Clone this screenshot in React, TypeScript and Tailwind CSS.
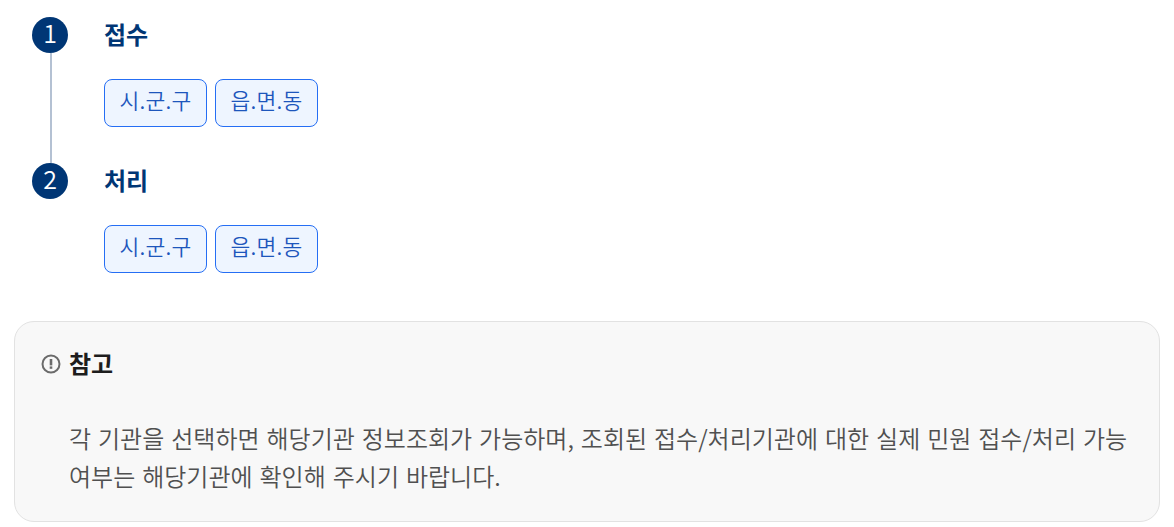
const AGENCIES = ["시.군.구", "읍.면.동"];

const STEPS = [
  { no: 1, title: "접수" },
  { no: 2, title: "처리" },
];

const NoticeIcon = () => (
  <svg width="20" height="20" viewBox="0 0 20 20" fill="none" className="shrink-0">
    <circle cx="10" cy="10" r="8.5" stroke="#6b6b6b" strokeWidth="2" />
    <path d="M10 5v6.4" stroke="#6b6b6b" strokeWidth="2.6" />
    <path d="M10 12.4v2.4" stroke="#6b6b6b" strokeWidth="2.6" />
  </svg>
);

const App = () => {
  return (
    <main className="h-[527px] w-[1174px] overflow-hidden bg-white px-[14px] pt-[17px] font-['Noto_Sans_CJK_KR',sans-serif]">
      <ol className="pl-[18px]">
        {STEPS.map((step, i) => (
          <li key={step.no} className="flex h-[146px] gap-9">
            <div className="flex w-9 flex-col items-center">
              <span className="flex size-9 shrink-0 items-center justify-center rounded-full bg-[#003675] pb-[6px] text-[25px] leading-none font-[350] text-white">
                {step.no}
              </span>
              {i < STEPS.length - 1 && <span className="ml-[2px] w-[2px] grow bg-[#b4c1d3]" />}
            </div>
            <div>
              <h2 className="h-9 text-[24px] leading-[34px] font-bold text-[#003675]">{step.title}</h2>
              <div className="mt-[26px] flex gap-2">
                {AGENCIES.map((name) => (
                  <button
                    key={name}
                    className="h-12 w-[103px] rounded-lg border border-[#256ef4] bg-[#eef5ff] pb-1.5 text-[21.5px] font-[350] tracking-[0.2px] text-[#1d56bc]"
                  >
                    {name}
                  </button>
                ))}
              </div>
            </div>
          </li>
        ))}
      </ol>

      <section className="mt-3 h-[201px] rounded-[20px] border border-[#e2e2e2] bg-[#f8f8f8] pt-6 pr-[26px] pl-[26px]">
        <div className="flex h-9 items-center gap-2">
          <NoticeIcon />
          <h3 className="pb-0.5 text-[24px] leading-[34px] font-bold text-[#1d1d1d]">참고</h3>
        </div>
        <p className="mt-[37px] pl-7 text-[24px] leading-[38px] font-[350] [word-spacing:1.6px] whitespace-nowrap text-[#505050]">
          각 기관을 선택하면 해당기관 정보조회가 가능하며, 조회된 접수/처리기관에 대한 실제 민원 접수/처리 가능
          <br />
          여부는 해당기관에 확인해 주시기 바랍니다.
        </p>
      </section>
    </main>
  );
};

export default App;
